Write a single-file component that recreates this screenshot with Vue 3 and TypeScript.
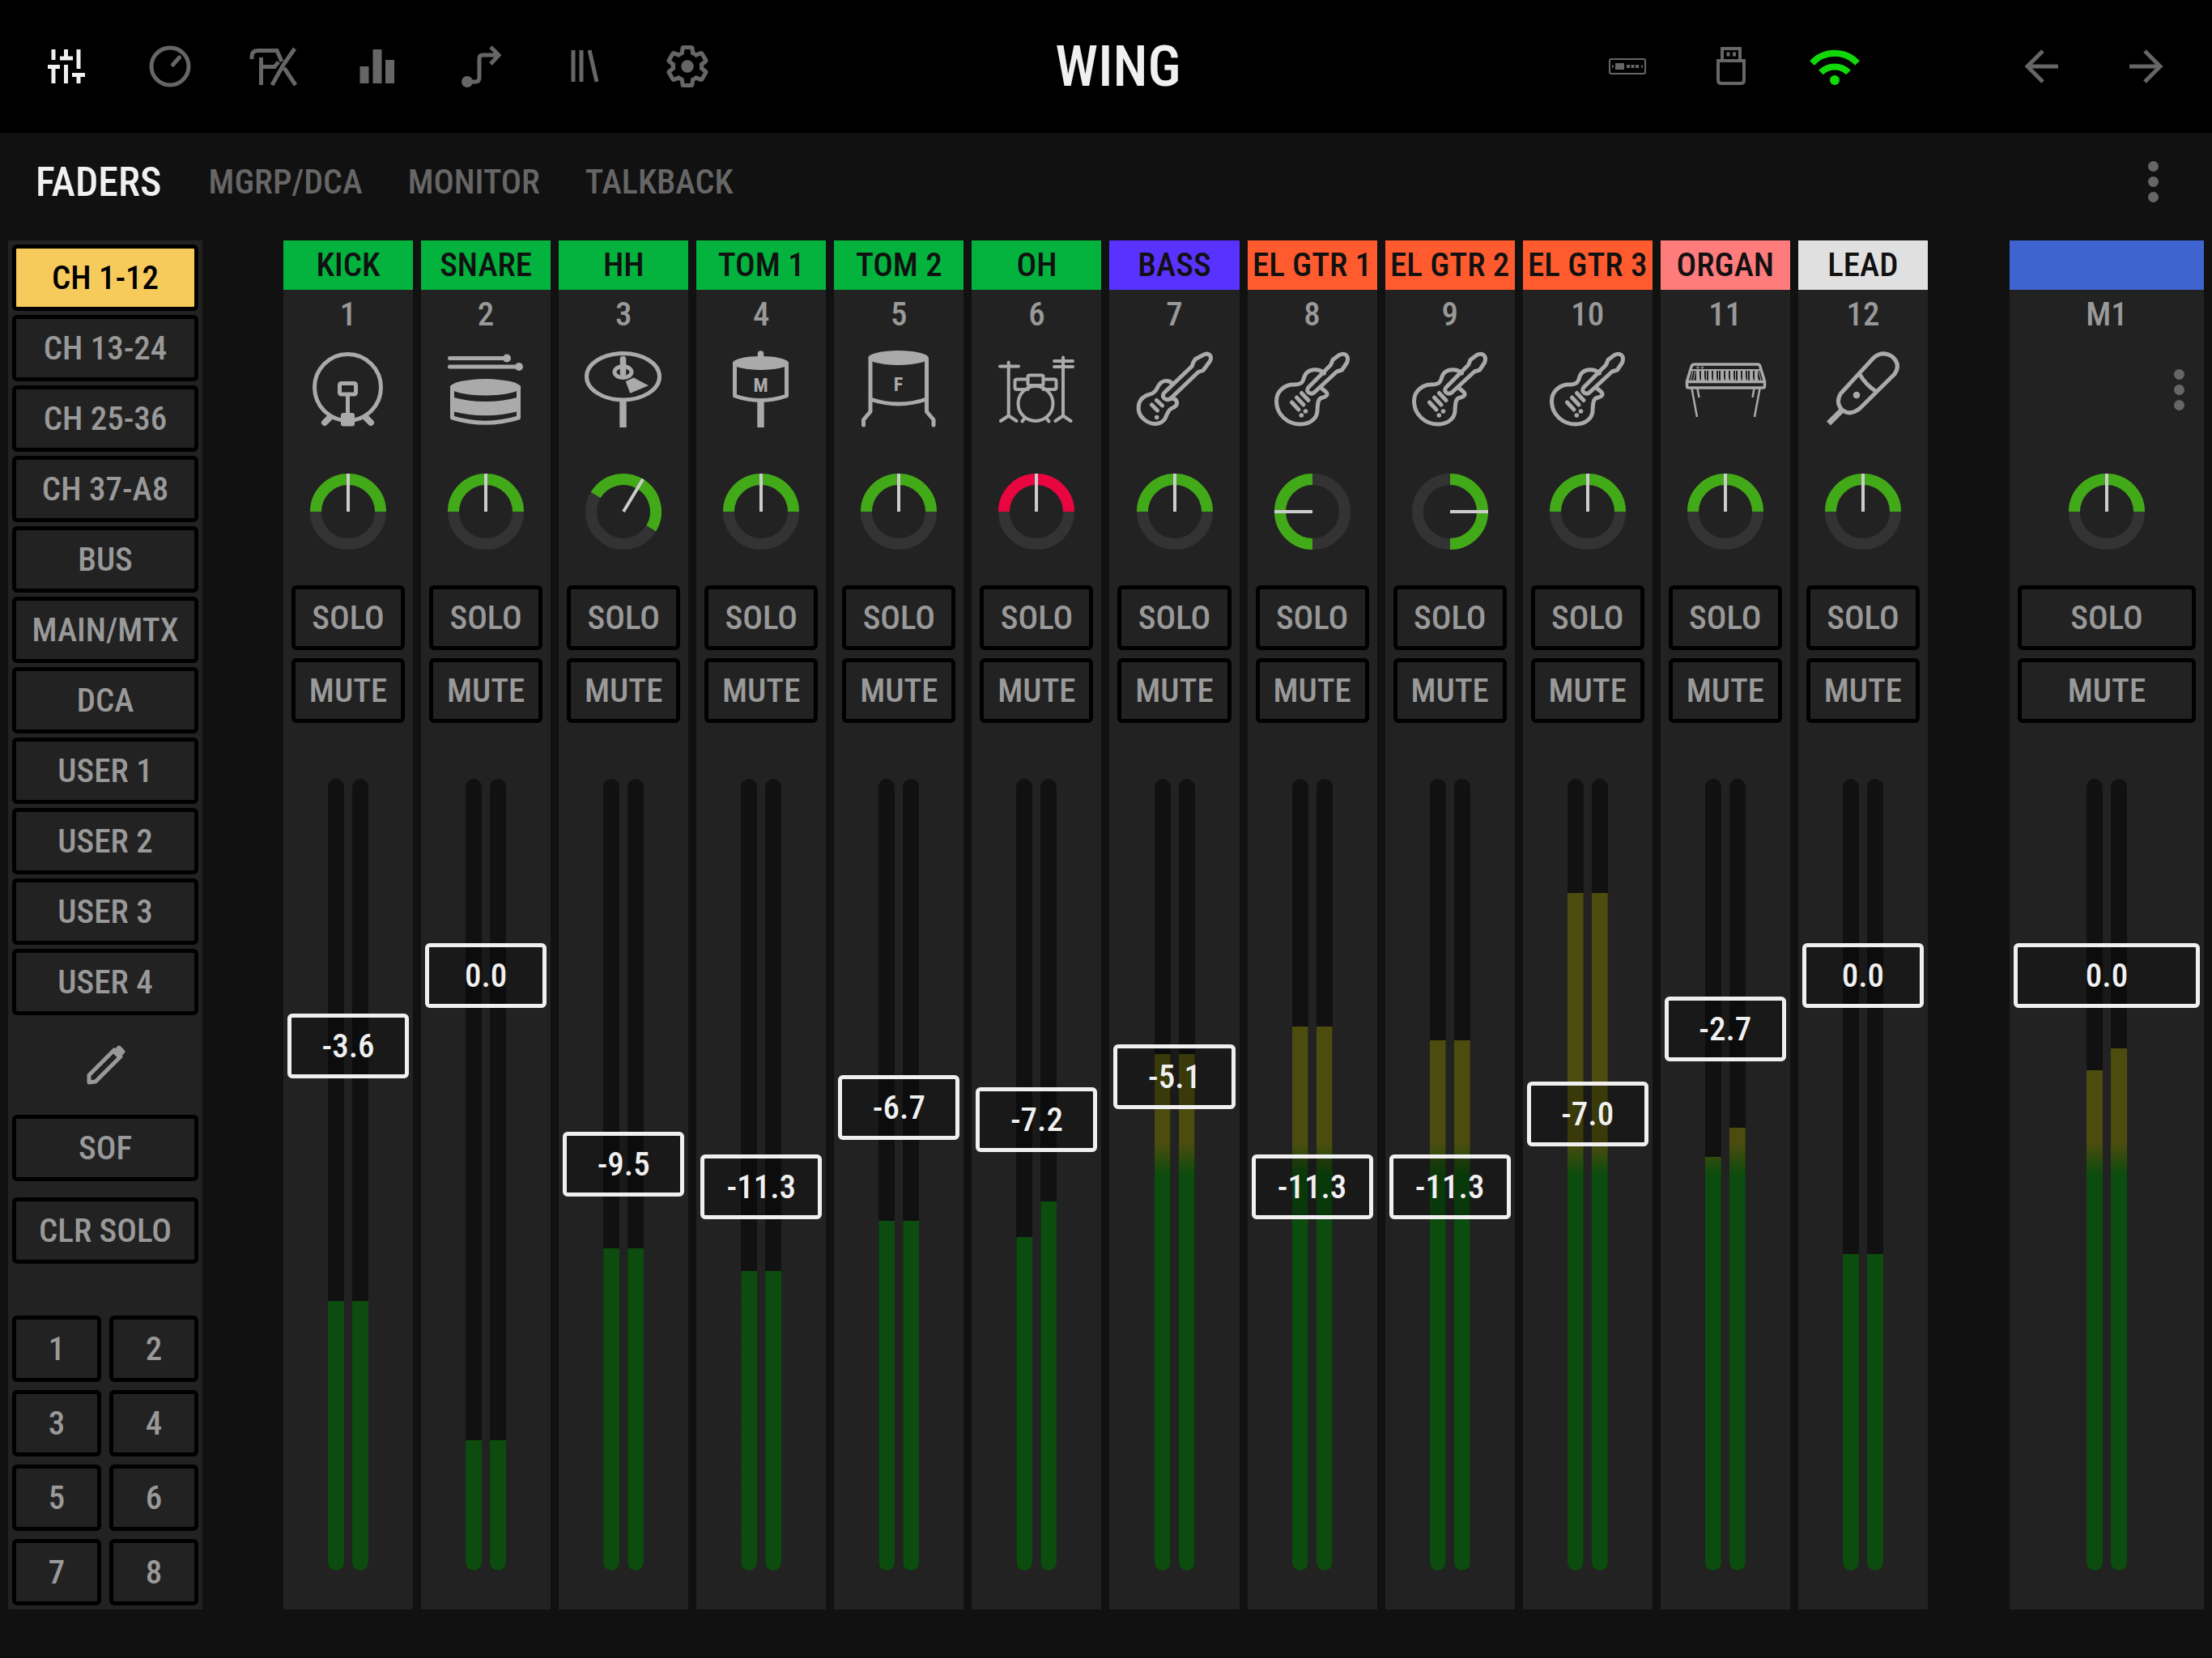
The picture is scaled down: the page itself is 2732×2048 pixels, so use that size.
<script setup lang="ts">
import { ref } from 'vue'

type IconName = 'kick' | 'snare' | 'hihat' | 'tom' | 'floor' | 'kit' | 'bass' | 'guitar' | 'organ' | 'mic' | 'none'

interface Strip {
  name: string
  num: string
  color: string
  icon: IconName
  pan: number
  ring: string
  gain: string
  fader: number
  left: number
  right: number
}

// Fader and meter positions are steps along a travel of this length, from the bottom.
const TRAVEL = 978
const GREEN = '#42a918'

const strip = (
  name: string, num: string, color: string, icon: IconName, pan: number,
  gain: string, fader: number, left: number, right: number = left, ring: string = GREEN,
): Strip => ({ name, num, color, icon, pan, ring, gain, fader, left, right })

const channels = ref<Strip[]>([
  strip('KICK', '1', '#03b33e', 'kick', 0, '-3.6', 648, 333),
  strip('SNARE', '2', '#03b33e', 'snare', 0, '0.0', 735, 161),
  strip('HH', '3', '#03b33e', 'hihat', 31, '-9.5', 502, 398),
  strip('TOM 1', '4', '#03b33e', 'tom', 0, '-11.3', 474, 370),
  strip('TOM 2', '5', '#03b33e', 'floor', 0, '-6.7', 572, 432),
  strip('OH', '6', '#03b33e', 'kit', 0, '-7.2', 557, 412, 456, '#e80540'),
  strip('BASS', '7', '#5a32ff', 'bass', 0, '-5.1', 610, 638),
  strip('EL GTR 1', '8', '#ff5b2e', 'guitar', -90, '-11.3', 474, 672),
  strip('EL GTR 2', '9', '#ff5b2e', 'guitar', 90, '-11.3', 474, 655),
  strip('EL GTR 3', '10', '#ff5b2e', 'guitar', 0, '-7.0', 564, 837),
  strip('ORGAN', '11', '#ff7c7c', 'organ', 0, '-2.7', 669, 511, 547),
  strip('LEAD', '12', '#e0e0e0', 'mic', 0, '0.0', 735, 391),
])
const mains = ref<Strip[]>([strip('', 'M1', '#3f64cf', 'none', 0, '0.0', 735, 618, 645)])

const banks = ['CH 1-12', 'CH 13-24', 'CH 25-36', 'CH 37-A8', 'BUS', 'MAIN/MTX', 'DCA', 'USER 1', 'USER 2', 'USER 3', 'USER 4']
const activeBank = ref('CH 1-12')
const tabs = ['FADERS', 'MGRP/DCA', 'MONITOR', 'TALKBACK']
const activeTab = ref('FADERS')

const uncovered = (level: number): string => `inset(${((TRAVEL - level) / TRAVEL) * 100}% 0 0 0)`
const fromBottom = (pos: number): string => `${(pos / TRAVEL) * 100}%`
const blackKeys = [14, 20, 29, 35, 44, 50, 56, 65, 71, 80, 86]
</script>

<template>
  <div class="app">
    <header class="topbar">
      <nav class="nav" aria-label="Views">
        <button class="nav-btn on" aria-label="Mixer">
          <svg class="ico" viewBox="0 0 56 56"><path d="M12 7v13M5 28.500h15M12 28v21M27.500 7v11M20 18h16M27.500 26v23M43 7v24M35 38.500h16M43 38v11" stroke-width="5" /></svg>
        </button>
        <button class="nav-btn" aria-label="Channel">
          <svg class="ico" viewBox="0 0 56 56"><circle cx="28" cy="28" r="23" stroke-width="5" /><path d="M39.500 17 31.500 26" stroke-width="5" stroke-linecap="round" /></svg>
        </button>
        <button class="nav-btn" aria-label="Effects">
          <svg class="ico" viewBox="0 0 56 56"><path d="M1 19v-3.500Q1 8.500 9 8.500H32L38 22M41 30l14 21M54 6 40 26 26 51M12.500 17v34M15 28.500h14l5-6" stroke-width="5" /></svg>
        </button>
        <button class="nav-btn" aria-label="Meters">
          <svg class="ico" viewBox="0 0 56 56"><path d="M12 28v21M28 7v42M43.500 20v29" stroke-width="11" /></svg>
        </button>
        <button class="nav-btn" aria-label="Routing">
          <svg class="ico" viewBox="0 0 56 56"><circle cx="11" cy="47" r="7" fill="currentColor" stroke="none" /><path d="M11 47h10q5 0 5-5V18q0-4 4-4h20M40 4l10 10-10 11" stroke-width="5" /></svg>
        </button>
        <button class="nav-btn" aria-label="Library">
          <svg class="ico" viewBox="0 0 56 56"><path d="M14 8v39M24 8v39M34 8l9 39" stroke-width="5" /></svg>
        </button>
        <button class="nav-btn" aria-label="Setup">
          <svg class="ico" viewBox="0 0 56 56"><g transform="translate(27 28) scale(2.350) translate(-12 -12)"><path stroke-width="2.200" d="M19.430 12.980c.04-.32.07-.64.07-.98 0-.34-.03-.66-.07-.98l2.110-1.650c.19-.15.24-.42.12-.64l-2-3.460c-.09-.16-.26-.25-.44-.25-.06 0-.12.010-.17.030l-2.490 1c-.52-.4-1.080-.73-1.690-.98l-.38-2.650C14.460 2.180 14.250 2 14 2h-4c-.25 0-.46.18-.49.42l-.38 2.650c-.61.25-1.170.59-1.690.98l-2.490-1c-.06-.02-.12-.03-.18-.03-.17 0-.34.09-.43.25l-2 3.460c-.13.22-.07.49.12.64l2.110 1.650c-.04.32-.07.65-.07.98 0 .33.03.66.07.98l-2.110 1.650c-.19.15-.24.42-.12.64l2 3.460c.09.16.26.25.44.25.06 0 .12-.01.17-.03l2.490-1c.52.4 1.080.73 1.690.98l.38 2.650c.03.24.24.42.49.42h4c.25 0 .46-.18.49-.42l.38-2.650c.61-.25 1.170-.59 1.690-.98l2.490 1c.06.020.12.030.18.030.17 0 .34-.09.43-.25l2-3.460c.12-.22.07-.49-.12-.64l-2.110-1.650z" /><circle cx="12" cy="12" r="3.300" fill="currentColor" stroke="none" /></g></svg>
        </button>
      </nav>
      <h1 class="brand">WING</h1>
      <div class="status">
        <button class="nav-btn" aria-label="Expansion card">
          <svg class="ico" viewBox="0 0 56 56"><rect x="6" y="19" width="44" height="18" rx="2" stroke-width="2" /><path d="M13 28h11" stroke-width="8" /><path d="M27 28h4M32.500 28h4M38 28h4" stroke-width="4" /><path d="M9 28h2M45 28h2" stroke-width="3" /></svg>
        </button>
        <button class="nav-btn" aria-label="USB">
          <svg class="ico" viewBox="0 0 56 56"><path d="M17 20V6h22v14M12 21h32v24q0 4-4 4H16q-4 0-4-4Z" stroke-width="4" /><path d="M22.500 13h4M30 13h4" stroke-width="5" /></svg>
        </button>
        <button class="nav-btn online" aria-label="Network">
          <svg class="ico" viewBox="0 0 56 56"><path d="M0 24a38 38 0 0 1 56 0M11 35.500a24 24 0 0 1 34 0" stroke-width="8" /><circle cx="28" cy="45" r="6" fill="currentColor" stroke="none" /></svg>
        </button>
        <button class="nav-btn back" aria-label="Previous">
          <svg class="ico" viewBox="0 0 56 56"><path d="M48 28H11M29 9 10 28l19 19" stroke-width="5" /></svg>
        </button>
        <button class="nav-btn" aria-label="Next">
          <svg class="ico" viewBox="0 0 56 56"><path d="M8 28h37M27 9l19 19-19 19" stroke-width="5" /></svg>
        </button>
      </div>
    </header>

    <div class="tabbar">
      <button v-for="t in tabs" :key="t" class="tab" :class="{ on: t === activeTab }" @click="activeTab = t">{{ t }}</button>
      <button class="more" aria-label="More options"><i></i><i></i><i></i></button>
    </div>

    <main class="desk">
      <aside class="side">
        <button v-for="b in banks" :key="b" class="key" :class="{ on: b === activeBank }" @click="activeBank = b">{{ b }}</button>
        <button class="edit" aria-label="Edit banks">
          <svg class="ico" viewBox="0 0 56 56"><path d="M8 49v-9L39 9l8 8-31 31Z" stroke-width="5" stroke-linejoin="round" /><path d="M36 11.500 43 4.500q2-2 4 0l4.500 4.500q2 2 0 4l-7 7Z" fill="currentColor" stroke="none" /></svg>
        </button>
        <button class="key sof">SOF</button>
        <button class="key">CLR SOLO</button>
        <div class="pads">
          <button v-for="n in 8" :key="n" class="key">{{ n }}</button>
        </div>
      </aside>

      <div v-for="(group, gi) in [channels, mains]" :key="gi" class="group" :class="gi === 0 ? 'channels' : 'mains'">
        <section v-for="s in group" :key="s.num" class="strip">
          <h2 class="name" :style="{ background: s.color }">{{ s.name }}</h2>
          <div class="num">{{ s.num }}</div>
          <div class="pic">
            <svg v-if="s.icon === 'kick'" class="inst" viewBox="0 0 100 100">
              <circle cx="49.500" cy="47.500" r="41" /><rect x="39.500" y="42.500" width="20" height="13.500" rx="2" /><path d="M49.500 57v24" /><rect class="solid" x="41" y="79" width="17" height="16.500" rx="3" /><path d="M27 85l-6 6M72 85l6 6" stroke-width="8" />
            </svg>
            <svg v-else-if="s.icon === 'snare'" class="inst" viewBox="0 0 100 100">
              <path d="M5.500 11.500H76M5.500 22H91M8.500 47V85Q49.500 97.500 90.500 85V47" /><circle class="solid" cx="76" cy="11.500" r="5" /><circle class="solid" cx="91" cy="22" r="5" /><ellipse class="solid" cx="49.500" cy="47.300" rx="43.500" ry="10.200" /><path class="solid" d="M8.500 59.500Q49.500 70.500 90.500 59.500V77Q49.500 87.500 8.500 77Z" />
            </svg>
            <svg v-else-if="s.icon === 'hihat'" class="inst" viewBox="0 0 100 100">
              <ellipse cx="49.500" cy="34.200" rx="45" ry="28.700" /><ellipse cx="49.500" cy="28.500" rx="10.500" ry="7" /><path d="M49.500 12.500V30" stroke-width="7.500" /><path class="solid" d="M52.700 40 62.700 35.400 81 45.200 58.300 54.700Z" /><path class="solid" d="M45.300 64h8.400V97h-8.400Z" />
            </svg>
            <svg v-else-if="s.icon === 'tom'" class="inst" viewBox="0 0 100 100">
              <path d="M49.500 6v7" stroke-width="7.500" /><ellipse class="solid" cx="49.500" cy="17.400" rx="34.500" ry="8.500" /><path d="M17.500 18V58Q49.500 69 81.500 58V18" /><path class="solid" d="M45.300 64h8.400V97h-8.400Z" /><text x="49.500" y="53">M</text>
            </svg>
            <svg v-else-if="s.icon === 'floor'" class="inst" viewBox="0 0 100 100">
              <ellipse class="solid" cx="49.500" cy="11" rx="37.300" ry="9" /><path d="M15 12V77.500L6.500 87.500V94M84.500 12V77.500L93 87.500V94M15 62Q49.500 74 84.500 62" /><text x="49.500" y="52">F</text>
            </svg>
            <svg v-else-if="s.icon === 'kit'" class="inst kit" viewBox="0 0 100 100">
              <path d="M5 21.500H28M15.700 16.500V82.500L6 89M15.700 82.500 25.500 89M72 15H95M72 22H95M83 10.500V82.500L73.500 89M83 82.500 92.500 89M36 85l-3.500 4.500M62 85l3.500 4.500" /><circle cx="49" cy="67.500" r="21.500" /><path d="M39.500 50H26q-2.500 0-2.500-2.500V40q0-2.500 2.500-2.500H39.500M58.500 50H72q2.500 0 2.500-2.500V40q0-2.500-2.500-2.500H58.500" /><rect x="39.500" y="32.500" width="19" height="12.500" rx="2" />
            </svg>
            <svg v-else-if="s.icon === 'bass'" class="inst" viewBox="0 0 100 100">
              <path d="M47 43C42 37 33 39 29.500 46C25 56 21 55 14 58C2 64 3 80 12 87C21 95 33 94 38 86C43 74 44 74 49 72C55 68 53 61 46 61.500M71 21.500 37 54Q33.500 58.500 37.500 61.500Q41.500 64 45 61L79 28.500L85 26.500L93.500 15Q96 10 92.500 7Q89 5 85 7.500L75.500 12.500Q72.500 16 71 21.500" /><path d="M21.500 69l7 7M27.500 63.500l7 6.500" /><circle class="solid" cx="27.700" cy="84.500" r="2.800" />
            </svg>
            <svg v-else-if="s.icon === 'guitar'" class="inst" viewBox="0 0 100 100">
              <path d="M64.500 30C58 23.500 44 24 40 34C38 42 36 43.500 28 44C16 43.500 5.500 52 5.500 64C5.500 82 20 93 35 93C49 93 56 84 56 76C56.500 66 57 60.500 63 60C70 58 68.500 54.500 66 52.500L60.500 48M72.300 20 45 47.500Q42 51.500 45.500 54Q49 56.500 52.500 53.500L80 28L86.500 26L92.500 17Q95 11 91.500 7.500Q88 5 83 7.500L75 13.500Q74 17 72.300 20" /><path d="M24.500 66l8.500 9M30.500 60l8.500 9M36.500 54.500l8.500 9" /><circle class="solid" cx="36.300" cy="82" r="2.800" /><circle class="solid" cx="41.500" cy="77" r="2.800" />
            </svg>
            <svg v-else-if="s.icon === 'organ'" class="inst organ" viewBox="0 0 100 100">
              <path d="M12 19H90Q92 19 92.700 21L98.500 40V46Q98.500 48 96.500 48H4.500Q2.500 48 2.500 46V40L8.300 21Q9 19 12 19ZM3 40.500H98" stroke-width="3.500" /><path d="M8 26H93" stroke-width="2" /><path d="M8.500 49 15 84M92.500 49 86 84M15.500 49l2 11M85.500 49l-2 11" stroke-width="2.500" /><path d="M10 27 7 39M13 27 10.500 39M17 35V39M23 35V39M26.500 27V39M32 35V39M38 35V39M41.500 27V39M47 35V39M53 35V39M59 35V39M62.500 27V39M68 35V39M74 35V39M77.500 27V39M83 35V39M88 35l1 4M91 27l3 12" stroke-width="1" /><path v-for="k in blackKeys" :key="k" class="solid" :d="`M${k} 27h4v8l1 4h-5Z`" /><circle cx="16" cy="23" r="1.200" stroke-width="1" /><circle cx="21.500" cy="23" r="1.200" stroke-width="1" />
            </svg>
            <svg v-else-if="s.icon === 'mic'" class="inst" viewBox="0 0 100 100">
              <path d="M63 11Q74 1.500 86 9.500Q97 19 89 31L46 73.500Q34.500 83 24.500 75.500Q15.500 66.500 22.500 55ZM46 31.500Q53 44 66 52.500" /><circle class="solid" cx="42" cy="57" r="4.300" /><path d="M24 75.500 7.500 92" stroke-width="7" stroke-linecap="butt" />
            </svg>
            <button v-else class="more menu" aria-label="Main options"><i></i><i></i><i></i></button>
          </div>
          <label class="knob">
            <svg viewBox="0 0 94 94" aria-hidden="true">
              <circle cx="47" cy="47" r="40" fill="none" stroke="#333" stroke-width="14" />
              <g :transform="`rotate(${s.pan} 47 47)`">
                <path d="M7 47a40 40 0 0 1 80 0" fill="none" :stroke="s.ring" stroke-width="14" />
                <path d="M47 0v47" stroke="#ccc" stroke-width="4" />
              </g>
            </svg>
            <input v-model.number="s.pan" type="range" min="-90" max="90" :aria-label="`Pan ${s.num}`" />
          </label>
          <button class="key act">SOLO</button>
          <button class="key act">MUTE</button>
          <div class="fader">
            <div class="meters">
              <div class="meter"><div class="level" :style="{ clipPath: uncovered(s.left) }"></div></div>
              <div class="meter"><div class="level" :style="{ clipPath: uncovered(s.right) }"></div></div>
            </div>
            <input v-model.number="s.fader" class="slide" type="range" min="0" :max="TRAVEL" :aria-label="`Fader ${s.num}`" />
            <div class="scale"><output class="gain" :style="{ bottom: fromBottom(s.fader) }">{{ s.gain }}</output></div>
          </div>
        </section>
      </div>
    </main>
  </div>
</template>

<style>
body {
  background: #111;
}
</style>

<style scoped>
.app {
  display: flex;
  flex-direction: column;
  min-height: 100vh;
  background: #111;
  color: #999;
  font-family: "Roboto Condensed", Roboto, sans-serif;
  font-size: 41px;
  font-weight: 500;
}
.app *, .app {
  box-sizing: border-box;
}
button {
  margin: 0;
  padding: 0;
  border: 0;
  background: none;
  color: inherit;
  font: inherit;
}
svg {
  display: block;
  overflow: visible;
}
.topbar {
  display: grid;
  grid-template-columns: 1fr auto 1fr;
  align-items: center;
  height: 164px;
  padding: 0 18px;
  background: #000;
}
.nav, .status {
  display: flex;
}
.status {
  justify-content: flex-end;
}
.nav-btn {
  display: flex;
  align-items: center;
  justify-content: center;
  width: 128px;
  height: 128px;
  color: #666;
}
.nav-btn.on {
  color: #f0f0f0;
}
.nav-btn.online {
  color: #12d80a;
}
.nav-btn.back {
  margin-left: 128px;
}
.ico {
  width: 56px;
  height: 56px;
  fill: none;
  stroke: currentColor;
}
.brand {
  margin: 0;
  padding-left: 30px;
  color: #f0f0f0;
  font-size: 70px;
  font-weight: 500;
  line-height: 80px;
}
.tabbar {
  display: flex;
  align-items: center;
  gap: 56px;
  height: 133px;
  padding: 0 48px 12px 44px;
}
.tab {
  color: #666;
  font-size: 42px;
}
.tab.on {
  margin-right: 2px;
  color: #f0f0f0;
  font-size: 50px;
}
.more {
  display: flex;
  flex-direction: column;
  align-items: center;
  gap: 6px;
  width: 50px;
  margin-left: auto;
}
.more i {
  width: 13px;
  height: 13px;
  border-radius: 50%;
  background: #666;
}
.desk {
  display: flex;
  flex: 1;
  gap: 100px;
  padding: 0 10px 60px;
}
.side {
  display: flex;
  flex-direction: column;
  gap: 5px;
  width: 240px;
  padding: 5px;
  background: #222;
}
.key {
  height: 82px;
  border: 5px solid #000;
  border-radius: 6px;
  line-height: 72px;
  white-space: nowrap;
}
.key.on {
  background: #f7ca5c;
  color: #000;
}
.edit {
  display: flex;
  align-items: center;
  justify-content: center;
  height: 113px;
}
.sof {
  margin-bottom: 15px;
}
.pads {
  display: grid;
  grid-template-columns: 1fr 1fr;
  gap: 10px;
  margin-top: auto;
}
.group {
  display: flex;
  gap: 10px;
}
.channels {
  flex: 1;
  margin-right: 1px;
}
.mains {
  width: 240px;
}
.strip {
  display: flex;
  flex: 1 1 0;
  flex-direction: column;
  min-width: 0;
  padding-bottom: 8px;
  background: #222;
}
.name {
  height: 61px;
  margin: 0;
  color: #111;
  font-size: inherit;
  font-weight: inherit;
  line-height: 61px;
  text-align: center;
  white-space: nowrap;
}
.num {
  line-height: 60px;
  text-align: center;
}
.pic {
  display: flex;
  align-items: center;
  justify-content: center;
  height: 126px;
}
.inst {
  width: 100px;
  height: 100px;
  fill: none;
  stroke: #aaa;
  stroke-width: 5;
  stroke-linecap: round;
  stroke-linejoin: round;
}
.inst.kit {
  stroke-width: 4;
}
.inst.organ {
  stroke-linecap: butt;
}
.inst .solid {
  fill: #aaa;
  stroke: none;
}
.inst text {
  fill: #aaa;
  stroke: none;
  font-size: 24px;
  font-weight: 700;
  text-anchor: middle;
}
.knob {
  position: relative;
  align-self: center;
  width: 94px;
  height: 94px;
  margin: 41px 0 44px;
}
.knob input {
  position: absolute;
  inset: 0;
  width: 100%;
  height: 100%;
  margin: 0;
  opacity: 0;
}
.act {
  height: 80px;
  margin: 0 10px 10px;
  line-height: 70px;
}
.fader {
  position: relative;
  flex: 1;
  min-height: 600px;
  margin-top: 19px;
}
.meters {
  display: flex;
  justify-content: center;
  gap: 10px;
  height: 100%;
  padding: 40px 0;
}
.meter {
  width: 20px;
  border-radius: 10px;
  background: #111;
  overflow: hidden;
}
.level {
  height: 100%;
  background: linear-gradient(#4c4c0e 46%, #0c4c0e 50%);
}
.slide {
  position: absolute;
  inset: 0 5px;
  width: calc(100% - 10px);
  height: 100%;
  margin: 0;
  appearance: none;
  background: none;
  writing-mode: vertical-lr;
  direction: rtl;
}
.slide::-webkit-slider-runnable-track {
  width: 100%;
  height: 100%;
}
.slide::-webkit-slider-thumb {
  appearance: none;
  width: 100%;
  height: 80px;
  box-sizing: border-box;
  border: 5px solid #f0f0f0;
  border-radius: 6px;
  background: rgba(0, 0, 0, 0.25);
}
.scale {
  position: absolute;
  inset: 40px 0;
  pointer-events: none;
}
.gain {
  position: absolute;
  left: 0;
  right: 0;
  height: 80px;
  margin-bottom: -40px;
  color: #f0f0f0;
  line-height: 80px;
  text-align: center;
}
.menu {
  margin-right: 6px;
}
</style>
